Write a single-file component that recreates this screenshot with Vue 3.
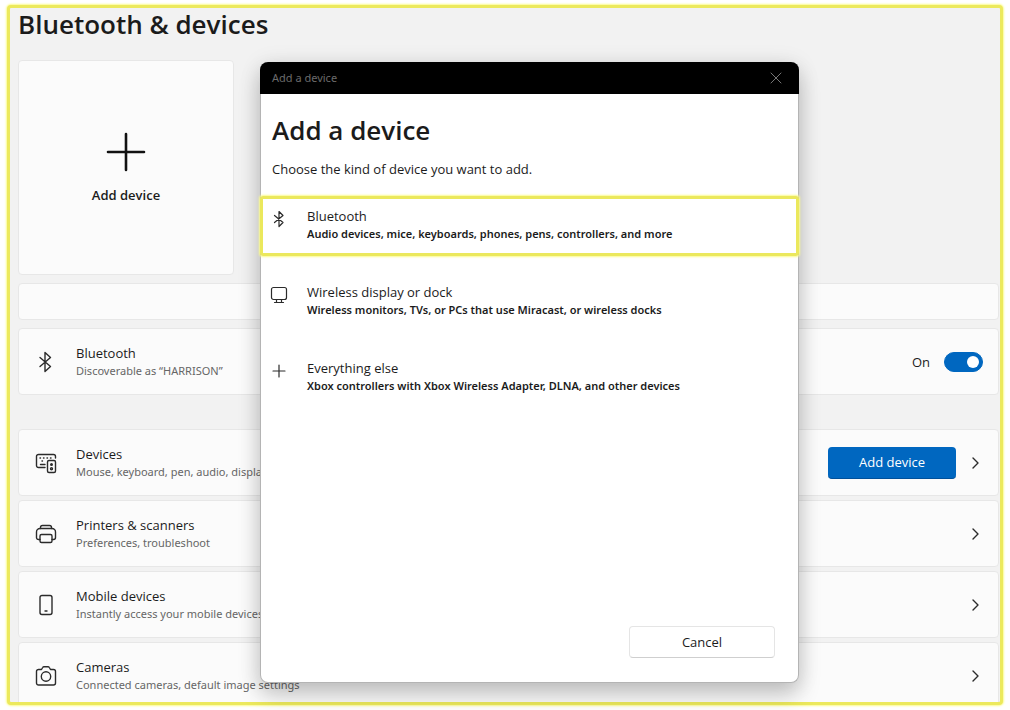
<script setup>
import { ref } from 'vue'

const bluetoothOn = ref(true)

const rows = [
  { icon: 'devices', title: 'Devices', text: 'Mouse, keyboard, pen, audio, displays and docks', action: 'Add device' },
  { icon: 'printer', title: 'Printers & scanners', text: 'Preferences, troubleshoot' },
  { icon: 'phone', title: 'Mobile devices', text: 'Instantly access your mobile devices from your PC' },
  { icon: 'camera', title: 'Cameras', text: 'Connected cameras, default image settings' },
]

const kinds = [
  { icon: 'bluetooth', title: 'Bluetooth', text: 'Audio devices, mice, keyboards, phones, pens, controllers, and more', selected: true },
  { icon: 'display', title: 'Wireless display or dock', text: 'Wireless monitors, TVs, or PCs that use Miracast, or wireless docks' },
  { icon: 'plus', title: 'Everything else', text: 'Xbox controllers with Xbox Wireless Adapter, DLNA, and other devices' },
]
</script>

<template>
  <div class="window">
    <main class="page">
      <h1 class="page-title">Bluetooth &amp; devices</h1>

      <button class="tile" type="button">
        <svg class="tile-icon" viewBox="0 0 40 40" aria-hidden="true">
          <path d="M20 2v36M2 20h36" />
        </svg>
        <span>Add device</span>
      </button>

      <div class="card strip"></div>

      <section class="card row bluetooth-row">
        <svg class="icon" viewBox="0 0 22 22" aria-hidden="true">
          <path d="M5 6.500l10.500 9L10 20.500V1.500l5.500 5L5 15.500" />
        </svg>
        <div class="row-text">
          <h2>Bluetooth</h2>
          <p>Discoverable as “HARRISON”</p>
        </div>
        <label class="switch">
          <span>On</span>
          <input v-model="bluetoothOn" type="checkbox" role="switch" />
        </label>
      </section>

      <div class="list">
        <section v-for="row in rows" :key="row.title" class="card row">
          <svg class="icon" viewBox="0 0 22 22" aria-hidden="true">
            <template v-if="row.icon === 'devices'">
              <path d="M10 15.500H3.500a2 2 0 0 1-2-2V4.500a2 2 0 0 1 2-2h15a2 2 0 0 1 2 2V6" />
              <path d="M5 6h.5M8.500 6h.5M12 6h.5M15.500 6h.5M7 9h.5M5.500 12.500h4.500" />
              <rect x="12.500" y="8.500" width="8" height="12" rx="1.500" />
              <circle cx="16.500" cy="12.500" r=".8" />
              <circle cx="16.500" cy="16.800" r="1" />
            </template>
            <template v-else-if="row.icon === 'printer'">
              <path d="M5 16.500H3.500a2 2 0 0 1-2-2V9a3.500 3.500 0 0 1 3.500-3.500h12A3.500 3.500 0 0 1 20.500 9v5.500a2 2 0 0 1-2 2H17" />
              <path d="M5.500 5.500V4.500a2 2 0 0 1 2-2h7a2 2 0 0 1 2 2v1" />
              <rect x="5" y="11.500" width="12" height="8" rx="1.500" />
            </template>
            <template v-else-if="row.icon === 'phone'">
              <rect x="5" y="1.500" width="12" height="19" rx="2" />
              <path d="M10 17h2" />
            </template>
            <template v-else>
              <path d="M3.500 4.500h3l1.200-2a1.500 1.500 0 0 1 1.300-.8h4a1.500 1.500 0 0 1 1.300.8l1.200 2h3a2 2 0 0 1 2 2V18a2 2 0 0 1-2 2h-15a2 2 0 0 1-2-2V6.500a2 2 0 0 1 2-2z" />
              <circle cx="11" cy="11.500" r="4.700" />
            </template>
          </svg>
          <div class="row-text">
            <h2>{{ row.title }}</h2>
            <p>{{ row.text }}</p>
          </div>
          <button v-if="row.action" class="primary" type="button">{{ row.action }}</button>
          <svg class="chevron" viewBox="0 0 12 12" aria-hidden="true">
            <path d="M4 1l5 5-5 5" />
          </svg>
        </section>
      </div>
    </main>

    <div class="dialog" role="dialog" aria-labelledby="dialog-title">
      <header class="dialog-bar">
        <span>Add a device</span>
        <button class="close" type="button" aria-label="Close">
          <svg viewBox="0 0 12 12" aria-hidden="true"><path d="M1 1l10 10M11 1L1 11" /></svg>
        </button>
      </header>
      <div class="dialog-head">
        <h2 id="dialog-title">Add a device</h2>
        <p>Choose the kind of device you want to add.</p>
      </div>
      <div class="kinds">
        <button v-for="kind in kinds" :key="kind.title" type="button" class="kind" :class="{ selected: kind.selected }">
          <svg class="kind-icon" viewBox="0 0 18 18" aria-hidden="true">
            <path v-if="kind.icon === 'bluetooth'" d="M4.500 5.500l8.500 7L9 16.500V1.500l4 4-8.500 7" />
            <template v-else-if="kind.icon === 'display'">
              <rect x="1.500" y="1.500" width="15" height="12" rx="2" />
              <path d="M6.500 13.500v3M11.500 13.500v3M4.500 16.500h9" />
            </template>
            <path v-else d="M9 3v12M3 9h12" />
          </svg>
          <span class="kind-text">
            <span>{{ kind.title }}</span>
            <strong>{{ kind.text }}</strong>
          </span>
        </button>
      </div>
      <footer class="dialog-foot">
        <button class="cancel" type="button">Cancel</button>
      </footer>
    </div>
  </div>
</template>

<style>
body {
  background: #fff;
}
</style>

<style scoped>
* {
  box-sizing: border-box;
}

h1,
h2,
p {
  margin: 0;
}

button {
  font: inherit;
  color: inherit;
}

svg {
  flex: none;
  fill: none;
  stroke: #2b2b2b;
  stroke-width: 1.4;
  stroke-linecap: round;
  stroke-linejoin: round;
}

.window {
  display: flow-root;
  position: relative;
  height: 100vh;
  padding: 5px 7px;
  overflow: hidden;
  font-family: "Open Sans", "Noto Sans", sans-serif;
  font-size: 13px;
  line-height: 18px;
  color: #1b1b1b;
}

.page {
  height: 100%;
  padding: 0 1px 0 8px;
  overflow: hidden;
  background: #f2f2f2;
  border: 3px solid #ece95c;
  border-radius: 4px;
  box-shadow: 0 0 2px 1px #fbfb8c;
}

.page-title {
  margin-bottom: 19px;
  font-size: 26px;
  font-weight: 600;
  line-height: 33px;
}

.card,
.tile {
  background: #fbfbfb;
  border: 1px solid #e7e7e7;
  border-radius: 4px;
}

.tile {
  display: flex;
  flex-direction: column;
  align-items: center;
  justify-content: center;
  gap: 14px;
  width: 216px;
  height: 215px;
  padding: 0;
  font-weight: 600;
}

.tile-icon {
  width: 40px;
  height: 40px;
  stroke: #111;
  stroke-width: 2.6;
}

.strip {
  height: 37px;
  margin: 8px 0;
}

.row {
  display: flex;
  align-items: center;
  height: 67px;
  padding: 0 15px 0 16px;
}

.bluetooth-row {
  margin-bottom: 34px;
}

.list {
  display: flex;
  flex-direction: column;
  gap: 4px;
}

.icon {
  width: 22px;
  height: 22px;
  margin-right: 19px;
}

.row-text {
  flex: 1;
  min-width: 0;
  white-space: nowrap;
}

.row-text h2 {
  font-size: 13px;
  font-weight: 400;
}

.row-text p {
  font-family: "Noto Sans", sans-serif;
  font-size: 11px;
  line-height: 17px;
  color: #666;
}

.switch {
  display: flex;
  align-items: center;
  gap: 14px;
}

.switch input {
  display: flex;
  align-items: center;
  width: 39px;
  height: 20px;
  margin: 0;
  padding: 0 3px;
  appearance: none;
  background: #fff;
  border: 1px solid #888;
  border-radius: 10px;
}

.switch input::before {
  content: "";
  width: 12px;
  height: 12px;
  background: #666;
  border-radius: 50%;
}

.switch input:checked {
  justify-content: flex-end;
  background: #0067c0;
  border-color: #0067c0;
}

.switch input:checked::before {
  background: #fff;
}

.primary {
  width: 128px;
  height: 32px;
  margin-right: 13px;
  color: #fff;
  background: #0067c0;
  border: 0;
  border-bottom: 1px solid #00509a;
  border-radius: 4px;
}

.chevron {
  width: 12px;
  height: 12px;
  margin-right: 2px;
}

.dialog {
  display: flex;
  flex-direction: column;
  position: absolute;
  top: 62px;
  left: 260px;
  right: 211px;
  bottom: 27px;
  background: #fff;
  border: 1px solid #b4b4b4;
  border-top: 0;
  border-radius: 8px;
  box-shadow: 0 12px 22px rgb(0 0 0 / 20%), 0 2px 22px rgb(0 0 0 / 10%);
}

.dialog-bar {
  display: flex;
  align-items: center;
  justify-content: space-between;
  height: 32px;
  margin: 0 -1px;
  padding: 0 16px 0 12px;
  font-family: "Noto Sans", sans-serif;
  font-size: 11px;
  color: #6b6b6b;
  background: #000;
  border-radius: 8px 8px 0 0;
}

.close {
  display: flex;
  padding: 0;
  background: none;
  border: 0;
}

.close svg {
  width: 14px;
  height: 12px;
  stroke: #777;
  stroke-width: 1;
}

.dialog-head {
  padding: 18px 11px;
}

.dialog-head h2 {
  margin-bottom: 12px;
  font-size: 26px;
  font-weight: 600;
  line-height: 36px;
}

.kinds {
  display: flex;
  flex-direction: column;
  gap: 16px;
  margin: 0 -1px;
}

.kind {
  display: flex;
  gap: 19px;
  height: 60px;
  padding: 8px 7px;
  text-align: left;
  background: none;
  border: 3px solid transparent;
  border-radius: 3px;
}

.selected {
  border-color: #ebe85c;
  box-shadow: 0 0 2px 1px #fbfb8c;
}

.kind-icon {
  width: 18px;
  height: 18px;
  margin-top: 3px;
  stroke-width: 1.2;
}

.kind-text {
  display: flex;
  flex-direction: column;
}

.kind-text strong {
  font-family: "Noto Sans", sans-serif;
  font-size: 11px;
  font-weight: 600;
  line-height: 17px;
}

.dialog-foot {
  display: flex;
  justify-content: flex-end;
  margin-top: auto;
  padding: 0 23px 24px;
}

.cancel {
  width: 146px;
  height: 32px;
  background: #fff;
  border: 1px solid #e5e5e5;
  border-bottom-color: #cfcfcf;
  border-radius: 4px;
}
</style>
